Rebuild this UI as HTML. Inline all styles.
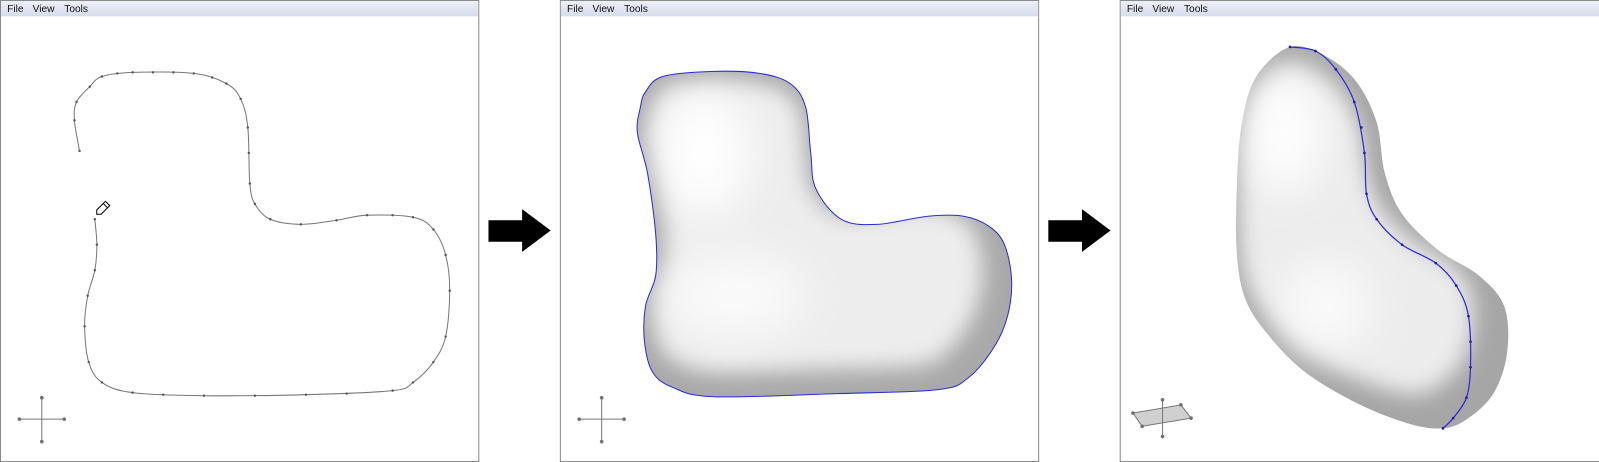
<!DOCTYPE html>
<html><head><meta charset="utf-8"><style>
html,body{margin:0;padding:0;background:#fff;width:1599px;height:462px;overflow:hidden}
svg{display:block}
text{font-family:"Liberation Sans",sans-serif;font-size:10px;fill:#111}
</style></head><body>
<svg width="1599" height="462" viewBox="0 0 1568 453" preserveAspectRatio="none">
<defs>
<linearGradient id="mb" x1="0" y1="0" x2="0" y2="1"><stop offset="0" stop-color="#eef0f8"/><stop offset="1" stop-color="#d6dbec"/></linearGradient>
<filter id="bl" x="-20%" y="-20%" width="140%" height="140%"><feGaussianBlur stdDeviation="12"/></filter>
<filter id="bl2" x="-50%" y="-50%" width="200%" height="200%"><feGaussianBlur stdDeviation="22"/></filter>
<path id="s2" data-p="633,90 650,75 700,70 745,72 775,82 790,105 795,150 800,185 825,215 860,220 910,212 945,212 970,222 985,240 992,275 988,310 975,340 950,370 920,382 820,386 700,389 660,380 640,365 632,335 633,300 643,270 643,230 635,170 625,130 628,105" d="M633,90 L650,75 L700,70 L745,72 L775,82 L790,105 L795,150 L800,185 L825,215 L860,220 L910,212 L945,212 L970,222 L985,240 L992,275 L988,310 L975,340 L950,370 L920,382 L820,386 L700,389 L660,380 L640,365 L632,335 L633,300 L643,270 L643,230 L635,170 L625,130 L628,105 Z"/>
<path id="s3" data-p="1265,46 1300,55 1330,80 1350,120 1358,170 1375,210 1410,245 1450,270 1475,300 1478,345 1465,385 1440,410 1415,420 1380,415 1330,395 1280,365 1245,330 1222,295 1213,250 1213,180 1218,120 1232,75" d="M1265,46 L1300,55 L1330,80 L1350,120 L1358,170 L1375,210 L1410,245 L1450,270 L1475,300 L1478,345 L1465,385 L1440,410 L1415,420 L1380,415 L1330,395 L1280,365 L1245,330 L1222,295 L1213,250 L1213,180 L1218,120 L1232,75 Z"/>
<clipPath id="c2"><use href="#s2"/></clipPath>
<clipPath id="c3"><use href="#s3"/></clipPath>
</defs>

<g>
<rect x="0.5" y="0.5" width="469" height="452" fill="#fff" stroke="#8a8a8a"/>
<rect x="1" y="1" width="468" height="15" fill="url(#mb)"/>
<text x="7" y="12">File</text><text x="32" y="12">View</text><text x="63" y="12">Tools</text>
</g>
<g>
<rect x="549.5" y="0.5" width="469" height="452" fill="#fff" stroke="#8a8a8a"/>
<rect x="550" y="1" width="468" height="15" fill="url(#mb)"/>
<text x="556" y="12">File</text><text x="581" y="12">View</text><text x="612" y="12">Tools</text>
</g>
<g>
<rect x="1098.5" y="0.5" width="470" height="452" fill="#fff" stroke="#8a8a8a"/>
<rect x="1099" y="1" width="469" height="15" fill="url(#mb)"/>
<text x="1105" y="12">File</text><text x="1130" y="12">View</text><text x="1161" y="12">Tools</text>
</g>

<path d="M479,216 H512 V205 L540,226 L512,247 V237 H479 Z" fill="#000"/>
<path d="M1028,216 H1061 V205 L1089,226 L1061,247 V237 H1028 Z" fill="#000"/>

<path id="c1" data-p="78,148 73,118 75,100 88,85 100,75 130,71 190,72 222,82 236,97 243,125 245,180 250,200 265,215 295,220 330,216 360,211 405,213 425,225 437,250 441,285 437,330 425,355 405,375 385,383 300,387 200,388 130,385 100,375 87,355 83,320 86,290 93,265 95,240 93,215" data-open="1" fill="none" stroke="#777" stroke-width="1" d=""/>
<g fill="#555">
<circle cx="78" cy="148" r="1.2"/><circle cx="73" cy="118" r="1.2"/><circle cx="75" cy="100" r="1.2"/><circle cx="88" cy="85" r="1.2"/><circle cx="100" cy="75" r="1.2"/><circle cx="115" cy="72" r="1.2"/><circle cx="130" cy="71" r="1.2"/><circle cx="150" cy="71" r="1.2"/><circle cx="170" cy="71" r="1.2"/><circle cx="190" cy="72" r="1.2"/><circle cx="208" cy="76" r="1.2"/><circle cx="222" cy="82" r="1.2"/><circle cx="236" cy="97" r="1.2"/><circle cx="243" cy="125" r="1.2"/><circle cx="244" cy="150" r="1.2"/><circle cx="245" cy="180" r="1.2"/><circle cx="250" cy="200" r="1.2"/><circle cx="265" cy="215" r="1.2"/><circle cx="295" cy="220" r="1.2"/><circle cx="330" cy="216" r="1.2"/><circle cx="360" cy="211" r="1.2"/><circle cx="385" cy="211" r="1.2"/><circle cx="405" cy="213" r="1.2"/><circle cx="425" cy="225" r="1.2"/><circle cx="437" cy="250" r="1.2"/><circle cx="441" cy="285" r="1.2"/><circle cx="437" cy="330" r="1.2"/><circle cx="425" cy="355" r="1.2"/><circle cx="405" cy="375" r="1.2"/><circle cx="385" cy="383" r="1.2"/><circle cx="340" cy="386" r="1.2"/><circle cx="300" cy="387" r="1.2"/><circle cx="250" cy="388" r="1.2"/><circle cx="200" cy="388" r="1.2"/><circle cx="160" cy="387" r="1.2"/><circle cx="130" cy="385" r="1.2"/><circle cx="100" cy="375" r="1.2"/><circle cx="87" cy="355" r="1.2"/><circle cx="83" cy="320" r="1.2"/><circle cx="86" cy="290" r="1.2"/><circle cx="93" cy="265" r="1.2"/><circle cx="95" cy="240" r="1.2"/><circle cx="93" cy="215" r="1.2"/>
</g>
<g transform="translate(97,208) rotate(-45)" fill="#fff" stroke="#000" stroke-width="1">
<path d="M-3,0 L0,-3 L12,-3 L12,3 L0,3 Z"/><line x1="9" y1="-3" x2="9" y2="3"/>
</g>

<g stroke="#777" stroke-width="1" fill="#666">
<line x1="19" y1="411" x2="63" y2="411"/><line x1="41" y1="390" x2="41" y2="433"/>
<circle cx="19" cy="411" r="1.3"/><circle cx="63" cy="411" r="1.3"/><circle cx="41" cy="390" r="1.3"/><circle cx="41" cy="433" r="1.3"/>
<line x1="568" y1="411" x2="612" y2="411"/><line x1="590" y1="390" x2="590" y2="433"/>
<circle cx="568" cy="411" r="1.3"/><circle cx="612" cy="411" r="1.3"/><circle cx="590" cy="390" r="1.3"/><circle cx="590" cy="433" r="1.3"/>
</g>
<g stroke="#777" stroke-width="1">
<path d="M1111,405 L1158,397 L1168,410 L1120,418 Z" fill="#d0d0d0"/>
<line x1="1140" y1="392" x2="1140" y2="428"/>
<g fill="#666"><circle cx="1140" cy="392" r="1.3"/><circle cx="1140" cy="428" r="1.3"/><circle cx="1111" cy="405" r="1.3"/><circle cx="1168" cy="410" r="1.3"/><circle cx="1120" cy="418" r="1.3"/><circle cx="1158" cy="397" r="1.3"/></g>
</g>

<g clip-path="url(#c2)">
<rect x="600" y="60" width="420" height="340" fill="#a9a9a9"/>
<use href="#s2" fill="#ededed" stroke="#f2f2f2" stroke-width="4" filter="url(#bl)" transform="translate(810,230) scale(0.88) translate(-810,-230) translate(-10,-8)"/>
<ellipse cx="690" cy="150" rx="45" ry="60" fill="#fff" filter="url(#bl2)"/>
<ellipse cx="720" cy="290" rx="70" ry="40" fill="#fafafa" filter="url(#bl2)"/>
</g>
<use href="#s2" fill="none" stroke="#2a2ad8" stroke-width="1"/>

<g clip-path="url(#c3)">
<rect x="1200" y="40" width="290" height="390" fill="#a6a6a6"/>
<use href="#s3" fill="#ececec" filter="url(#bl)" transform="translate(1320,240) scale(0.86) translate(-1320,-240) translate(-14,-10)"/>
<ellipse cx="1260" cy="130" rx="35" ry="60" fill="#fff" filter="url(#bl2)"/>
<ellipse cx="1300" cy="300" rx="45" ry="45" fill="#fafafa" filter="url(#bl2)"/>
</g>
<path id="bline" data-open="1" data-p="1265,46 1290,50 1310,68 1328,100 1338,150 1340,190 1350,215 1375,240 1408,258 1428,280 1440,310 1442,360 1438,390 1425,410 1415,420" fill="none" stroke="#2a2ad8" stroke-width="1.2" d=""/>
<g fill="#1a1ab0">
<circle cx="1265" cy="46" r="1.3"/><circle cx="1290" cy="50" r="1.3"/><circle cx="1310" cy="68" r="1.3"/><circle cx="1328" cy="100" r="1.3"/><circle cx="1335" cy="125" r="1.3"/><circle cx="1338" cy="150" r="1.3"/><circle cx="1340" cy="190" r="1.3"/><circle cx="1350" cy="215" r="1.3"/><circle cx="1375" cy="240" r="1.3"/><circle cx="1408" cy="258" r="1.3"/><circle cx="1428" cy="280" r="1.3"/><circle cx="1440" cy="310" r="1.3"/><circle cx="1442" cy="335" r="1.3"/><circle cx="1442" cy="360" r="1.3"/><circle cx="1438" cy="390" r="1.3"/><circle cx="1425" cy="410" r="1.3"/><circle cx="1415" cy="420" r="1.3"/>
</g>
</svg>
<script>
document.querySelectorAll('path[data-p]').forEach(function(el){
  var p=el.getAttribute('data-p').trim().split(/\s+/).map(function(s){return s.split(',').map(Number);});
  var open=el.hasAttribute('data-open'),n=p.length;
  function g(i){if(open){return p[Math.max(0,Math.min(n-1,i))];}return p[(i+n)%n];}
  var d='M'+p[0][0]+','+p[0][1],m=open?n-1:n;
  for(var i=0;i<m;i++){var a=g(i-1),b=g(i),c=g(i+1),e=g(i+2);
    d+=' C'+(b[0]+(c[0]-a[0])/6).toFixed(1)+','+(b[1]+(c[1]-a[1])/6).toFixed(1)+' '+(c[0]-(e[0]-b[0])/6).toFixed(1)+','+(c[1]-(e[1]-b[1])/6).toFixed(1)+' '+c[0]+','+c[1];}
  if(!open)d+=' Z';
  el.setAttribute('d',d);
});
</script>
</body></html>
